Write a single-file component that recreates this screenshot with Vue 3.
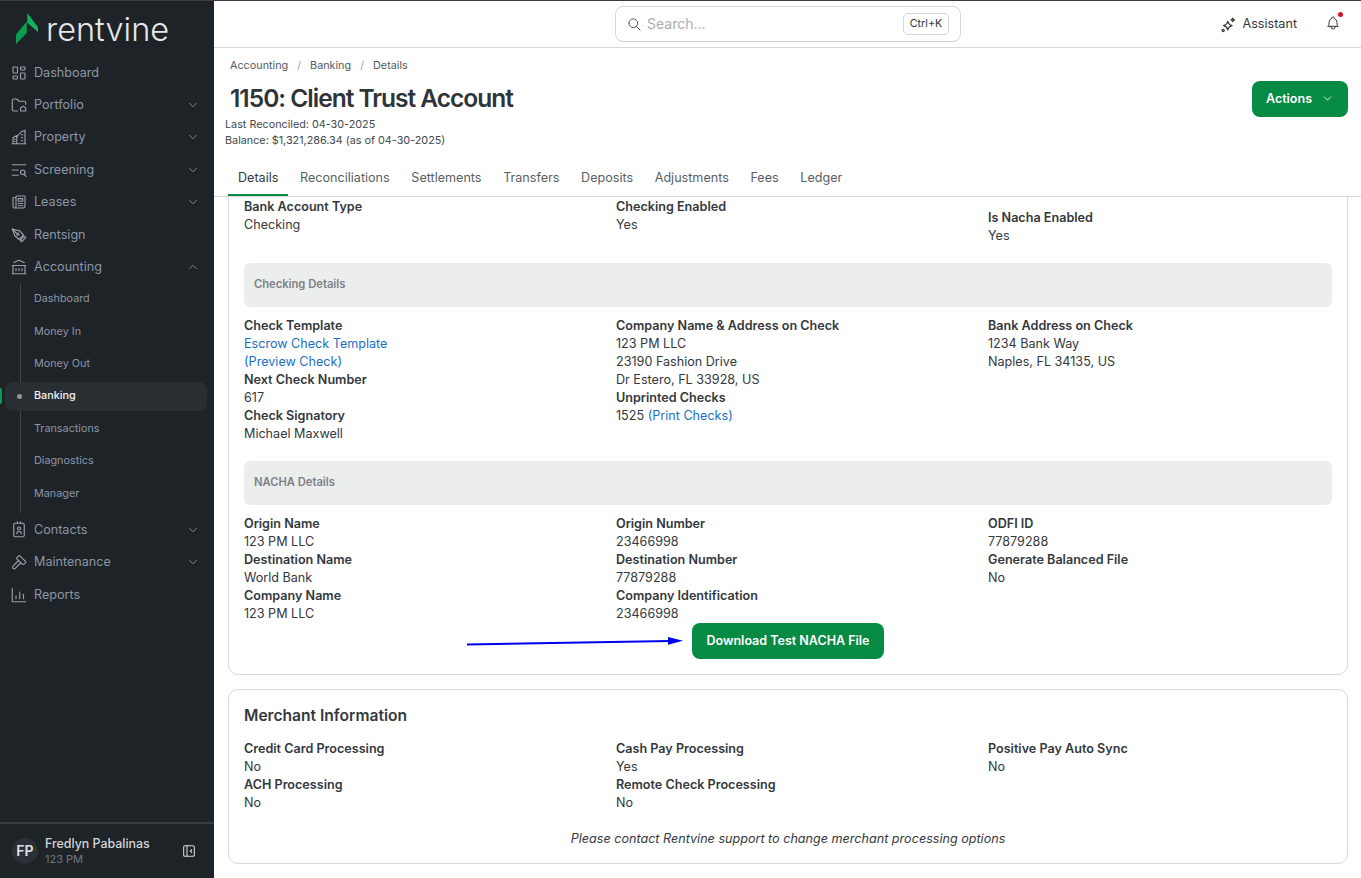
<template>
  <div class="app">
    <aside class="sidebar">
      <div class="logo">
        <svg width="23" height="32" viewBox="0 0 23 32">
          <path d="M0 21.5 L10.8 8.5 V20 L0 31 Z" fill="#0a9f50" />
          <path d="M11.3 0 L22 14.3 V19 L11.3 9.7 Z" fill="#12b35f" />
        </svg>
        <span class="logo-text">rentvine</span>
      </div>
      <nav class="nav">
        <template v-for="item in nav" :key="item.label">
          <div class="nav-item">
            <svg class="nav-icon" viewBox="0 0 24 24">
              <path v-for="(d, i) in item.icon" :key="i" :d="d" />
            </svg>
            <span>{{ item.label }}</span>
            <svg v-if="item.caret" class="caret" :class="{ up: item.open }" viewBox="0 0 24 24">
              <path d="M6 9l6 6l6 -6" />
            </svg>
          </div>
          <div v-if="item.children" class="subnav">
            <div
              v-for="child in item.children"
              :key="child"
              class="sub-item"
              :class="{ active: child === 'Banking' }"
            >
              <i v-if="child === 'Banking'" class="dot"></i>
              <span>{{ child }}</span>
            </div>
          </div>
        </template>
      </nav>
      <div class="user">
        <div class="avatar">FP</div>
        <div class="user-text">
          <div class="user-name">Fredlyn Pabalinas</div>
          <div class="user-org">123 PM</div>
        </div>
        <svg class="collapse" viewBox="0 0 24 24">
          <path d="M4 6a2 2 0 0 1 2 -2h12a2 2 0 0 1 2 2v12a2 2 0 0 1 -2 2h-12a2 2 0 0 1 -2 -2z" />
          <path d="M9 4v16" />
          <path d="M16 10l-2 2l2 2" />
        </svg>
      </div>
    </aside>

    <main class="main">
      <header class="topbar">
        <div class="search">
          <svg class="search-icon" viewBox="0 0 24 24">
            <path d="M3 10a7 7 0 1 0 14 0a7 7 0 1 0 -14 0" />
            <path d="M21 21l-6 -6" />
          </svg>
          <span class="search-text">Search...</span>
          <span class="kbd">Ctrl+K</span>
        </div>
        <div class="assistant">
          <svg viewBox="0 0 24 24">
            <path d="M11 7.5c.8 3.6 2.4 5.2 6 6c-3.6 .8 -5.2 2.4 -6 6c-.8 -3.6 -2.4 -5.2 -6 -6c3.6 -.8 5.2 -2.4 6 -6z" />
            <path d="M18 3c.3 1.5 1 2.2 2.5 2.5c-1.5 .3 -2.2 1 -2.5 2.5c-.3 -1.5 -1 -2.2 -2.5 -2.5c1.5 -.3 2.2 -1 2.5 -2.5z" />
            <path d="M3 20.5a1.5 1.5 0 1 0 3 0a1.5 1.5 0 1 0 -3 0" />
          </svg>
          Assistant
        </div>
        <div class="bell">
          <svg viewBox="0 0 24 24">
            <path d="M10 5a2 2 0 1 1 4 0a7 7 0 0 1 4 6v3a4 4 0 0 0 2 3h-16a4 4 0 0 0 2 -3v-3a7 7 0 0 1 4 -6" />
            <path d="M9 17v1a3 3 0 0 0 6 0v-1" />
          </svg>
          <i class="bell-dot"></i>
        </div>
      </header>

      <section class="page-head">
        <div class="head-row">
          <div>
            <div class="crumbs">
              <span>Accounting</span><em>/</em><span>Banking</span><em>/</em><span>Details</span>
            </div>
            <h1>1150: Client Trust Account</h1>
          </div>
          <button class="btn actions">
            Actions
            <svg viewBox="0 0 24 24"><path d="M6 9l6 6l6 -6" /></svg>
          </button>
        </div>
        <div class="meta">
          <div>Last Reconciled: 04-30-2025</div>
          <div>Balance: $1,321,286.34 (as of 04-30-2025)</div>
        </div>
        <div class="tabs">
          <div v-for="tab in tabs" :key="tab" class="tab" :class="{ active: tab === 'Details' }">{{ tab }}</div>
        </div>
      </section>

      <section class="content">
        <div class="card bank-card">
          <div class="grid top-grid">
            <div>
              <div class="label">Bank Account Type</div>
              <div>Checking</div>
            </div>
            <div>
              <div class="label">Checking Enabled</div>
              <div>Yes</div>
            </div>
            <div class="nudged">
              <div class="label">Is Nacha Enabled</div>
              <div>Yes</div>
            </div>
          </div>

          <div class="band"><span>Checking Details</span></div>
          <div class="grid">
            <div>
              <div class="label">Check Template</div>
              <div><a>Escrow Check Template</a></div>
              <div><a>(Preview Check)</a></div>
              <div class="label">Next Check Number</div>
              <div>617</div>
              <div class="label">Check Signatory</div>
              <div>Michael Maxwell</div>
            </div>
            <div>
              <div class="label">Company Name &amp; Address on Check</div>
              <div>123 PM LLC</div>
              <div>23190 Fashion Drive</div>
              <div>Dr Estero, FL 33928, US</div>
              <div class="label">Unprinted Checks</div>
              <div>1525 <a>(Print Checks)</a></div>
            </div>
            <div>
              <div class="label">Bank Address on Check</div>
              <div>1234 Bank Way</div>
              <div>Naples, FL 34135, US</div>
            </div>
          </div>

          <div class="band"><span>NACHA Details</span></div>
          <div class="grid">
            <div>
              <div class="label">Origin Name</div>
              <div>123 PM LLC</div>
              <div class="label">Destination Name</div>
              <div>World Bank</div>
              <div class="label">Company Name</div>
              <div>123 PM LLC</div>
            </div>
            <div>
              <div class="label">Origin Number</div>
              <div>23466998</div>
              <div class="label">Destination Number</div>
              <div>77879288</div>
              <div class="label">Company Identification</div>
              <div>23466998</div>
            </div>
            <div>
              <div class="label">ODFI ID</div>
              <div>77879288</div>
              <div class="label">Generate Balanced File</div>
              <div>No</div>
            </div>
          </div>
          <div class="download-row">
            <button class="btn download">Download Test NACHA File</button>
            <svg class="arrow" width="220" height="16" viewBox="0 0 220 16">
              <path d="M0 12.6 L203 9" fill="none" stroke="#0000f0" stroke-width="2" />
              <path d="M201 5 L216 8.7 L201 12.8 Z" fill="#0000f0" />
            </svg>
          </div>
        </div>

        <div class="card merchant">
          <h2>Merchant Information</h2>
          <div class="grid">
            <div>
              <div class="label">Credit Card Processing</div>
              <div>No</div>
              <div class="label">ACH Processing</div>
              <div>No</div>
            </div>
            <div>
              <div class="label">Cash Pay Processing</div>
              <div>Yes</div>
              <div class="label">Remote Check Processing</div>
              <div>No</div>
            </div>
            <div>
              <div class="label">Positive Pay Auto Sync</div>
              <div>No</div>
            </div>
          </div>
          <p class="note">Please contact Rentvine support to change merchant processing options</p>
        </div>
      </section>
    </main>
  </div>
</template>

<script setup>
const nav = [
  {
    label: 'Dashboard',
    icon: [
      'M5 4h4a1 1 0 0 1 1 1v6a1 1 0 0 1 -1 1h-4a1 1 0 0 1 -1 -1v-6a1 1 0 0 1 1 -1',
      'M5 16h4a1 1 0 0 1 1 1v2a1 1 0 0 1 -1 1h-4a1 1 0 0 1 -1 -1v-2a1 1 0 0 1 1 -1',
      'M15 12h4a1 1 0 0 1 1 1v6a1 1 0 0 1 -1 1h-4a1 1 0 0 1 -1 -1v-6a1 1 0 0 1 1 -1',
      'M15 4h4a1 1 0 0 1 1 1v2a1 1 0 0 1 -1 1h-4a1 1 0 0 1 -1 -1v-2a1 1 0 0 1 1 -1',
    ],
  },
  {
    label: 'Portfolio',
    caret: true,
    icon: [
      'M10 20h-5a2 2 0 0 1 -2 -2v-12a2 2 0 0 1 2 -2h4l3 3h7a2 2 0 0 1 2 2v2',
      'M14 20v-4l3.5 -2.5l3.5 2.5v4z',
    ],
  },
  {
    label: 'Property',
    caret: true,
    icon: [
      'M3 21h18',
      'M4 21v-8l5 -3v11',
      'M9 12l6 -7l5 -2v18',
      'M15 9h2',
      'M15 13h2',
      'M15 17h2',
      'M6 15h1',
      'M6 18h1',
    ],
  },
  {
    label: 'Screening',
    caret: true,
    icon: ['M3 5h18', 'M3 12h8', 'M3 19h8', 'M14 15a3 3 0 1 0 6 0a3 3 0 1 0 -6 0', 'M19 18l2.5 2.5'],
  },
  {
    label: 'Leases',
    caret: true,
    icon: [
      'M8 6h-3a1 1 0 0 0 -1 1v11a2 2 0 0 0 4 0v-13a1 1 0 0 1 1 -1h10a1 1 0 0 1 1 1v12a3 3 0 0 1 -3 3h-11',
      'M11 7.5h6v3.5h-6z',
      'M11 14h6',
      'M11 17h6',
    ],
  },
  {
    label: 'Rentsign',
    icon: [
      'M3 4l10 2.5l5 5.5l-6 6l-5.5 -5z',
      'M3 4l6.5 6.5',
      'M9 11a1.5 1.5 0 1 0 3 0a1.5 1.5 0 1 0 -3 0',
      'M19 13.5l2 2l-5.5 5.5l-2 -2z',
    ],
  },
  {
    label: 'Accounting',
    caret: true,
    open: true,
    icon: ['M3 21h18', 'M3 10h18', 'M5 6l7 -3l7 3', 'M4 10v11', 'M20 10v11', 'M8 14v3', 'M12 14v3', 'M16 14v3'],
    children: ['Dashboard', 'Money In', 'Money Out', 'Banking', 'Transactions', 'Diagnostics', 'Manager'],
  },
  {
    label: 'Contacts',
    caret: true,
    icon: [
      'M5 3m0 2a2 2 0 0 1 2 -2h10a2 2 0 0 1 2 2v14a2 2 0 0 1 -2 2h-10a2 2 0 0 1 -2 -2z',
      'M10 10a2 2 0 1 0 4 0a2 2 0 1 0 -4 0',
      'M9 17a3 3 0 0 1 6 0',
      'M10 1v2',
      'M14 1v2',
    ],
  },
  {
    label: 'Maintenance',
    caret: true,
    icon: [
      'M11.414 10l-7.383 7.418a2.091 2.091 0 0 0 0 2.967a2.11 2.11 0 0 0 2.976 0l7.407 -7.385',
      'M18.121 15.293l2.586 -2.586a1 1 0 0 0 0 -1.414l-7.586 -7.586a1 1 0 0 0 -1.414 0l-2.586 2.586a1 1 0 0 0 0 1.414l7.586 7.586a1 1 0 0 0 1.414 0z',
    ],
  },
  {
    label: 'Reports',
    icon: ['M3 3v17a1 1 0 0 0 1 1h17', 'M8 17v-4', 'M13 17v-9', 'M18 17v-6'],
  },
]

const tabs = ['Details', 'Reconciliations', 'Settlements', 'Transfers', 'Deposits', 'Adjustments', 'Fees', 'Ledger']
</script>

<style>
html,
body {
  margin: 0;
  height: 100%;
  overflow: hidden;
  background: #fff;
}
</style>

<style scoped>
.app {
  display: flex;
  height: 878px;
  border-top: 1px solid #3f3b40;
  box-sizing: border-box;
  font-family: Inter, 'Liberation Sans', sans-serif;
  font-size: 12.6px;
  line-height: 18px;
  color: #33383d;
}

/* sidebar */
.sidebar {
  width: 214px;
  flex: none;
  display: flex;
  flex-direction: column;
  background: #1e2328;
  color: #8c96a6;
}

.logo {
  height: 55.5px;
  display: flex;
  align-items: center;
  gap: 7px;
  padding-left: 16px;
  flex: none;
}

.logo-text {
  font-size: 32.5px;
  line-height: 40px;
  color: #e6e8ea;
  font-weight: 300;
  margin-top: 2px;
}

.nav {
  flex: 1;
}

.nav-item {
  height: 32.4px;
  display: flex;
  align-items: center;
  padding-left: 10px;
  padding-right: 14px;
}

.nav-icon {
  width: 18px;
  height: 18px;
  margin-right: 6px;
  flex: none;
  fill: none;
  stroke: #9aa1a9;
  stroke-width: 1.5;
  stroke-linecap: round;
  stroke-linejoin: round;
}

.caret {
  width: 14px;
  height: 14px;
  margin-left: auto;
  fill: none;
  stroke: #8f969e;
  stroke-width: 1.5;
  stroke-linecap: round;
  stroke-linejoin: round;
}

.caret.up {
  transform: rotate(180deg);
}

.subnav {
  position: relative;
  padding-bottom: 3.9px;
}

.subnav::before {
  content: '';
  position: absolute;
  left: 20px;
  top: 0;
  bottom: 1px;
  width: 1px;
  background: #3f454b;
}

.sub-item {
  position: relative;
  height: 32.4px;
  display: flex;
  align-items: center;
  padding-left: 34px;
  font-size: 10.8px;
}

.sub-item span {
  position: relative;
}

.sub-item.active {
  color: #f1f2f3;
  font-weight: 500;
}

.sub-item.active span {
  top: -1px;
}

.sub-item.active::before {
  content: '';
  position: absolute;
  left: 5px;
  right: 7px;
  top: 2px;
  bottom: 2px;
  background: #292e33;
  border-radius: 8px;
}

.sub-item.active::after {
  content: '';
  position: absolute;
  left: 0;
  top: 8px;
  width: 2px;
  height: 16px;
  background: #0a9a4e;
  border-radius: 0 2px 2px 0;
}

.dot {
  position: absolute;
  left: 17px;
  top: 14px;
  width: 5px;
  height: 5px;
  border-radius: 50%;
  background: #8f969e;
  z-index: 1;
}

.user {
  height: 56px;
  flex: none;
  border-top: 2px solid #383d42;
  display: flex;
  align-items: center;
  padding-left: 12px;
  padding-right: 17px;
  box-sizing: border-box;
}

.avatar {
  width: 26px;
  height: 26px;
  border-radius: 50%;
  background: #2a3036;
  color: #dfe1e3;
  font-weight: 600;
  font-size: 14px;
  display: flex;
  align-items: center;
  justify-content: center;
  margin-right: 7px;
}

.user-name {
  color: #d3d5d8;
  font-size: 12.4px;
  font-weight: 500;
  line-height: 16px;
}

.user-org {
  color: #70767d;
  font-size: 11px;
  line-height: 15px;
}

.collapse {
  width: 16px;
  height: 16px;
  margin-left: auto;
  fill: none;
  stroke: #d7d9db;
  stroke-width: 1.6;
  stroke-linecap: round;
  stroke-linejoin: round;
}

/* top bar */
.main {
  flex: 1;
  min-width: 0;
  display: flex;
  flex-direction: column;
  overflow: hidden;
}

.topbar {
  height: 47px;
  flex: none;
  box-sizing: border-box;
  border-bottom: 1px solid #d9d9d9;
  display: flex;
  align-items: center;
  padding: 0 20px 0 401px;
}

.search {
  width: 346px;
  height: 36px;
  box-sizing: border-box;
  border: 1px solid #d4d6d8;
  border-radius: 8px;
  display: flex;
  align-items: center;
  padding: 0 11px;
}

.search-icon {
  width: 15px;
  height: 15px;
  fill: none;
  stroke: #50565c;
  stroke-width: 1.6;
  stroke-linecap: round;
  stroke-linejoin: round;
  margin-right: 5px;
}

.search-text {
  font-size: 14px;
  color: #a9aeb3;
}

.kbd {
  margin-left: auto;
  width: 46px;
  height: 22px;
  box-sizing: border-box;
  border: 1px solid #d4d6d8;
  border-radius: 5px;
  font-size: 10.8px;
  display: flex;
  align-items: center;
  justify-content: center;
}

.assistant {
  margin-left: auto;
  display: flex;
  align-items: center;
  gap: 6px;
}

.assistant svg {
  width: 17px;
  height: 17px;
  fill: none;
  stroke: #33383d;
  stroke-width: 1.7;
  stroke-linejoin: round;
}

.bell {
  position: relative;
  margin-left: 28px;
  margin-bottom: 2px;
  width: 16px;
  height: 16px;
}

.bell svg {
  width: 16px;
  height: 16px;
  fill: none;
  stroke: #33383d;
  stroke-width: 1.5;
  stroke-linecap: round;
  stroke-linejoin: round;
}

.bell-dot {
  position: absolute;
  top: -3px;
  right: -2px;
  width: 5px;
  height: 5px;
  border-radius: 50%;
  background: #d8121f;
}

/* page head */
.page-head {
  flex: none;
  height: 149px;
  box-sizing: border-box;
  border-bottom: 1px solid #d9d9d9;
  padding: 9px 13px 0 14px;
  display: flex;
  flex-direction: column;
}

.head-row {
  display: flex;
  justify-content: space-between;
  align-items: flex-start;
}

.crumbs {
  font-size: 10.8px;
  color: #53585e;
  padding-left: 2px;
  line-height: 18px;
}

.crumbs em {
  font-style: normal;
  color: #9a9ea3;
  margin: 0 9px;
}

h1 {
  margin: 6px 0 0;
  padding-left: 2px;
  font-size: 24.5px;
  line-height: 34px;
  font-weight: 600;
  letter-spacing: -1px;
  color: #2f3439;
}

.btn {
  border: none;
  background: #068a44;
  color: #fff;
  font-family: inherit;
  font-size: 12.5px;
  font-weight: 600;
  border-radius: 8px;
  height: 36px;
  padding: 0 0 2px;
}

.actions {
  width: 96px;
  margin-top: 24px;
  display: flex;
  align-items: center;
  justify-content: center;
  gap: 9px;
}

.actions svg {
  width: 13px;
  height: 13px;
  fill: none;
  stroke: #fff;
  stroke-width: 1.6;
  stroke-linecap: round;
  stroke-linejoin: round;
}

.meta {
  font-size: 10.8px;
  line-height: 16px;
  color: #43484d;
  margin-left: -3px;
}

.tabs {
  margin-top: auto;
  display: flex;
  gap: 1.6px;
}

.tab {
  padding: 11px 10px 7px;
  color: #5a5f65;
  border-bottom: 2px solid transparent;
}

.tab.active {
  color: #33383d;
  border-bottom-color: #068a44;
}

/* content */
.content {
  flex: 1;
  overflow: hidden;
  padding: 0 13px 0 14px;
}

.card {
  border: 1px solid #d9d9d9;
  border-radius: 10px;
  padding: 0 15px;
}

.bank-card {
  margin-top: -20px;
  padding-top: 18px;
  height: 498px;
  box-sizing: border-box;
}

.grid {
  display: grid;
  grid-template-columns: repeat(3, 1fr);
  column-gap: 28px;
  padding-top: 2px;
}

.label {
  font-weight: 600;
}

a {
  color: #1a6fc4;
}

.nudged {
  margin-top: 11px;
}

.top-grid {
  height: 47px;
}

.band {
  height: 44px;
  margin: 18px 0 8px;
  padding: 0 0 2px 10px;
  box-sizing: border-box;
  display: flex;
  align-items: center;
  background: #eceded;
  border-radius: 6px;
  font-size: 11.2px;
  font-weight: 600;
  color: #7c8187;
}

.download-row {
  position: relative;
  display: flex;
  justify-content: center;
}

.download {
  width: 192px;
}

.arrow {
  position: absolute;
  left: 223px;
  top: 9px;
}

.merchant {
  margin-top: 14px;
  height: 175px;
  box-sizing: border-box;
}

h2 {
  margin: 15px 0 0;
  font-size: 15.6px;
  line-height: 22px;
  font-weight: 600;
  color: #33383d;
}

.merchant .grid {
  margin-top: 11px;
}

.note {
  margin: 18px 0 0;
  text-align: center;
  font-style: italic;
}
</style>
